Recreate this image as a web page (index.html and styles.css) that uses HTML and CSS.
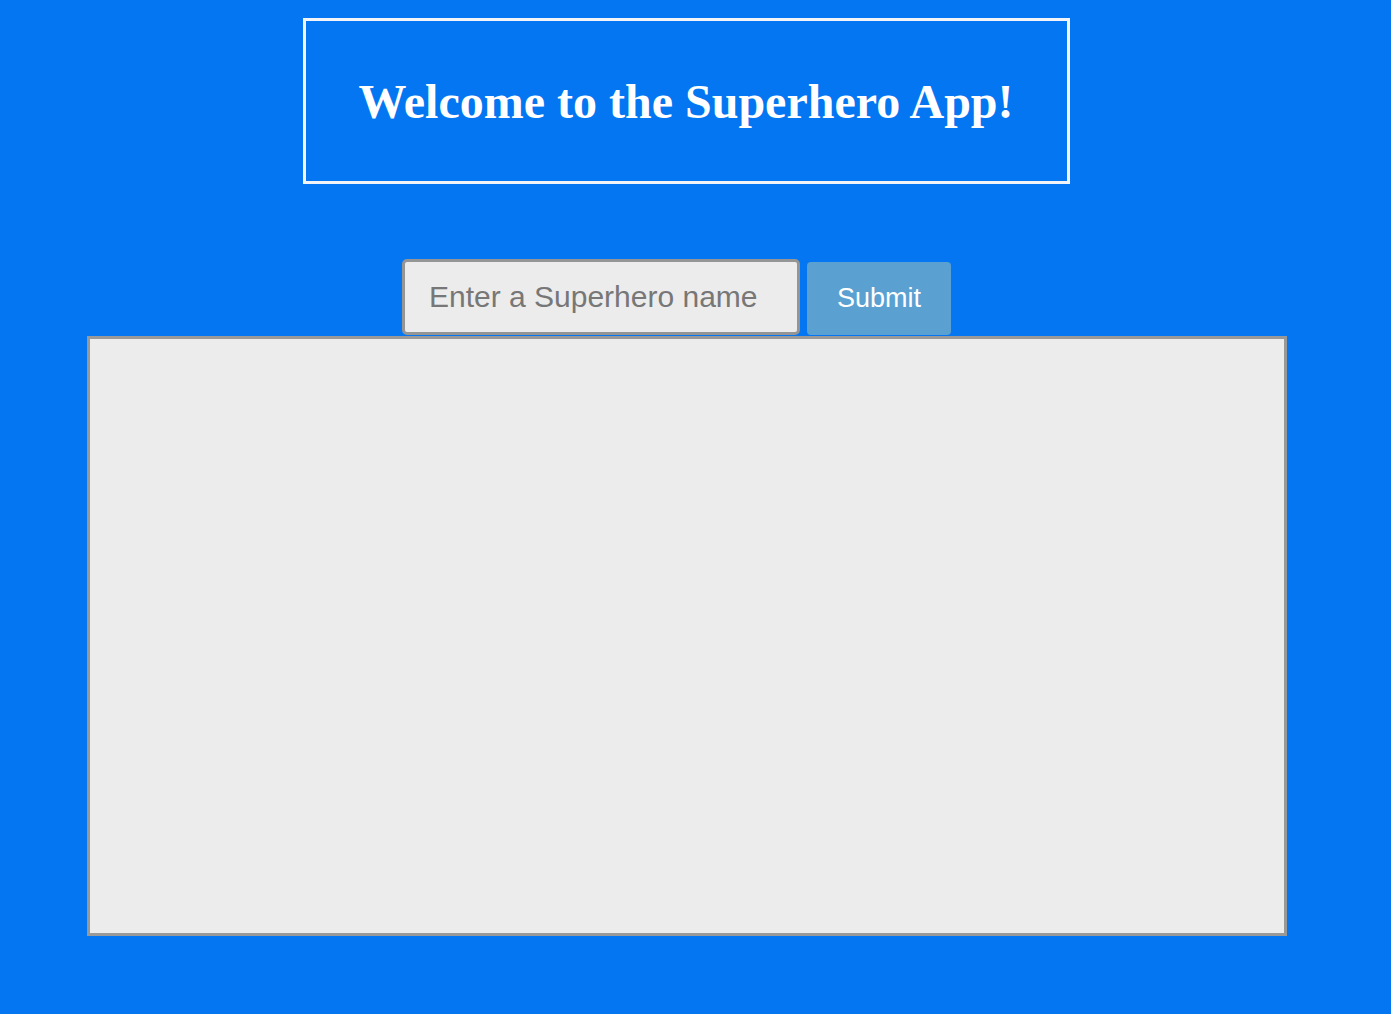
FILE: index.html
```html
<!DOCTYPE html>
<html>
<head>
<meta charset="utf-8">
<title>Superhero App</title>
<link rel="stylesheet" href="styles.css">
</head>
<body>
<div class="page">
  <header class="banner">
    <h1 class="title">Welcome to the Superhero App!</h1>
  </header>
  <form class="search">
    <input class="search-input" type="text" placeholder="Enter a Superhero name">
    <button class="search-btn" type="button">Submit</button>
  </form>
  <div class="results"></div>
</div>
</body>
</html>
```
FILE: styles.css
```css
html, body {
  margin: 0;
  padding: 0;
  background: #0576f2;
  height: 100%;
}
.page {
  width: 1374px;
  display: flex;
  flex-direction: column;
  align-items: center;
}
.banner {
  box-sizing: border-box;
  margin-top: 18px;
  margin-right: 1px;
  width: 767px;
  height: 166px;
  border: 3px solid #f2f4f8;
  display: flex;
  align-items: center;
  justify-content: center;
}
.title {
  margin: 0;
  font-family: "Liberation Serif", "Times New Roman", serif;
  font-weight: bold;
  font-size: 48px;
  color: #ffffff;
  padding-right: 1px;
}
.search {
  margin-top: 75px;
  margin-right: 21px;
  display: flex;
  align-items: flex-start;
  gap: 7px;
  height: 76px;
}
.search-input {
  box-sizing: border-box;
  width: 398px;
  height: 76px;
  border: 3px solid #959595;
  border-radius: 5px;
  background: #ececec;
  padding: 0 24px;
  font-family: "Liberation Sans", Arial, sans-serif;
  font-size: 30px;
  color: #333;
  outline: none;
}
.search-input::placeholder {
  color: #777777;
}
.search-btn {
  box-sizing: border-box;
  margin-top: 3px;
  width: 144px;
  height: 73px;
  border: none;
  border-radius: 4px;
  background: #5aa1d1;
  color: #ffffff;
  font-family: "Liberation Sans", Arial, sans-serif;
  font-size: 27px;
  cursor: pointer;
}
.results {
  box-sizing: border-box;
  margin-top: 1px;
  width: 1200px;
  height: 600px;
  border: 3px solid #999999;
  background: #ececec;
}
```
